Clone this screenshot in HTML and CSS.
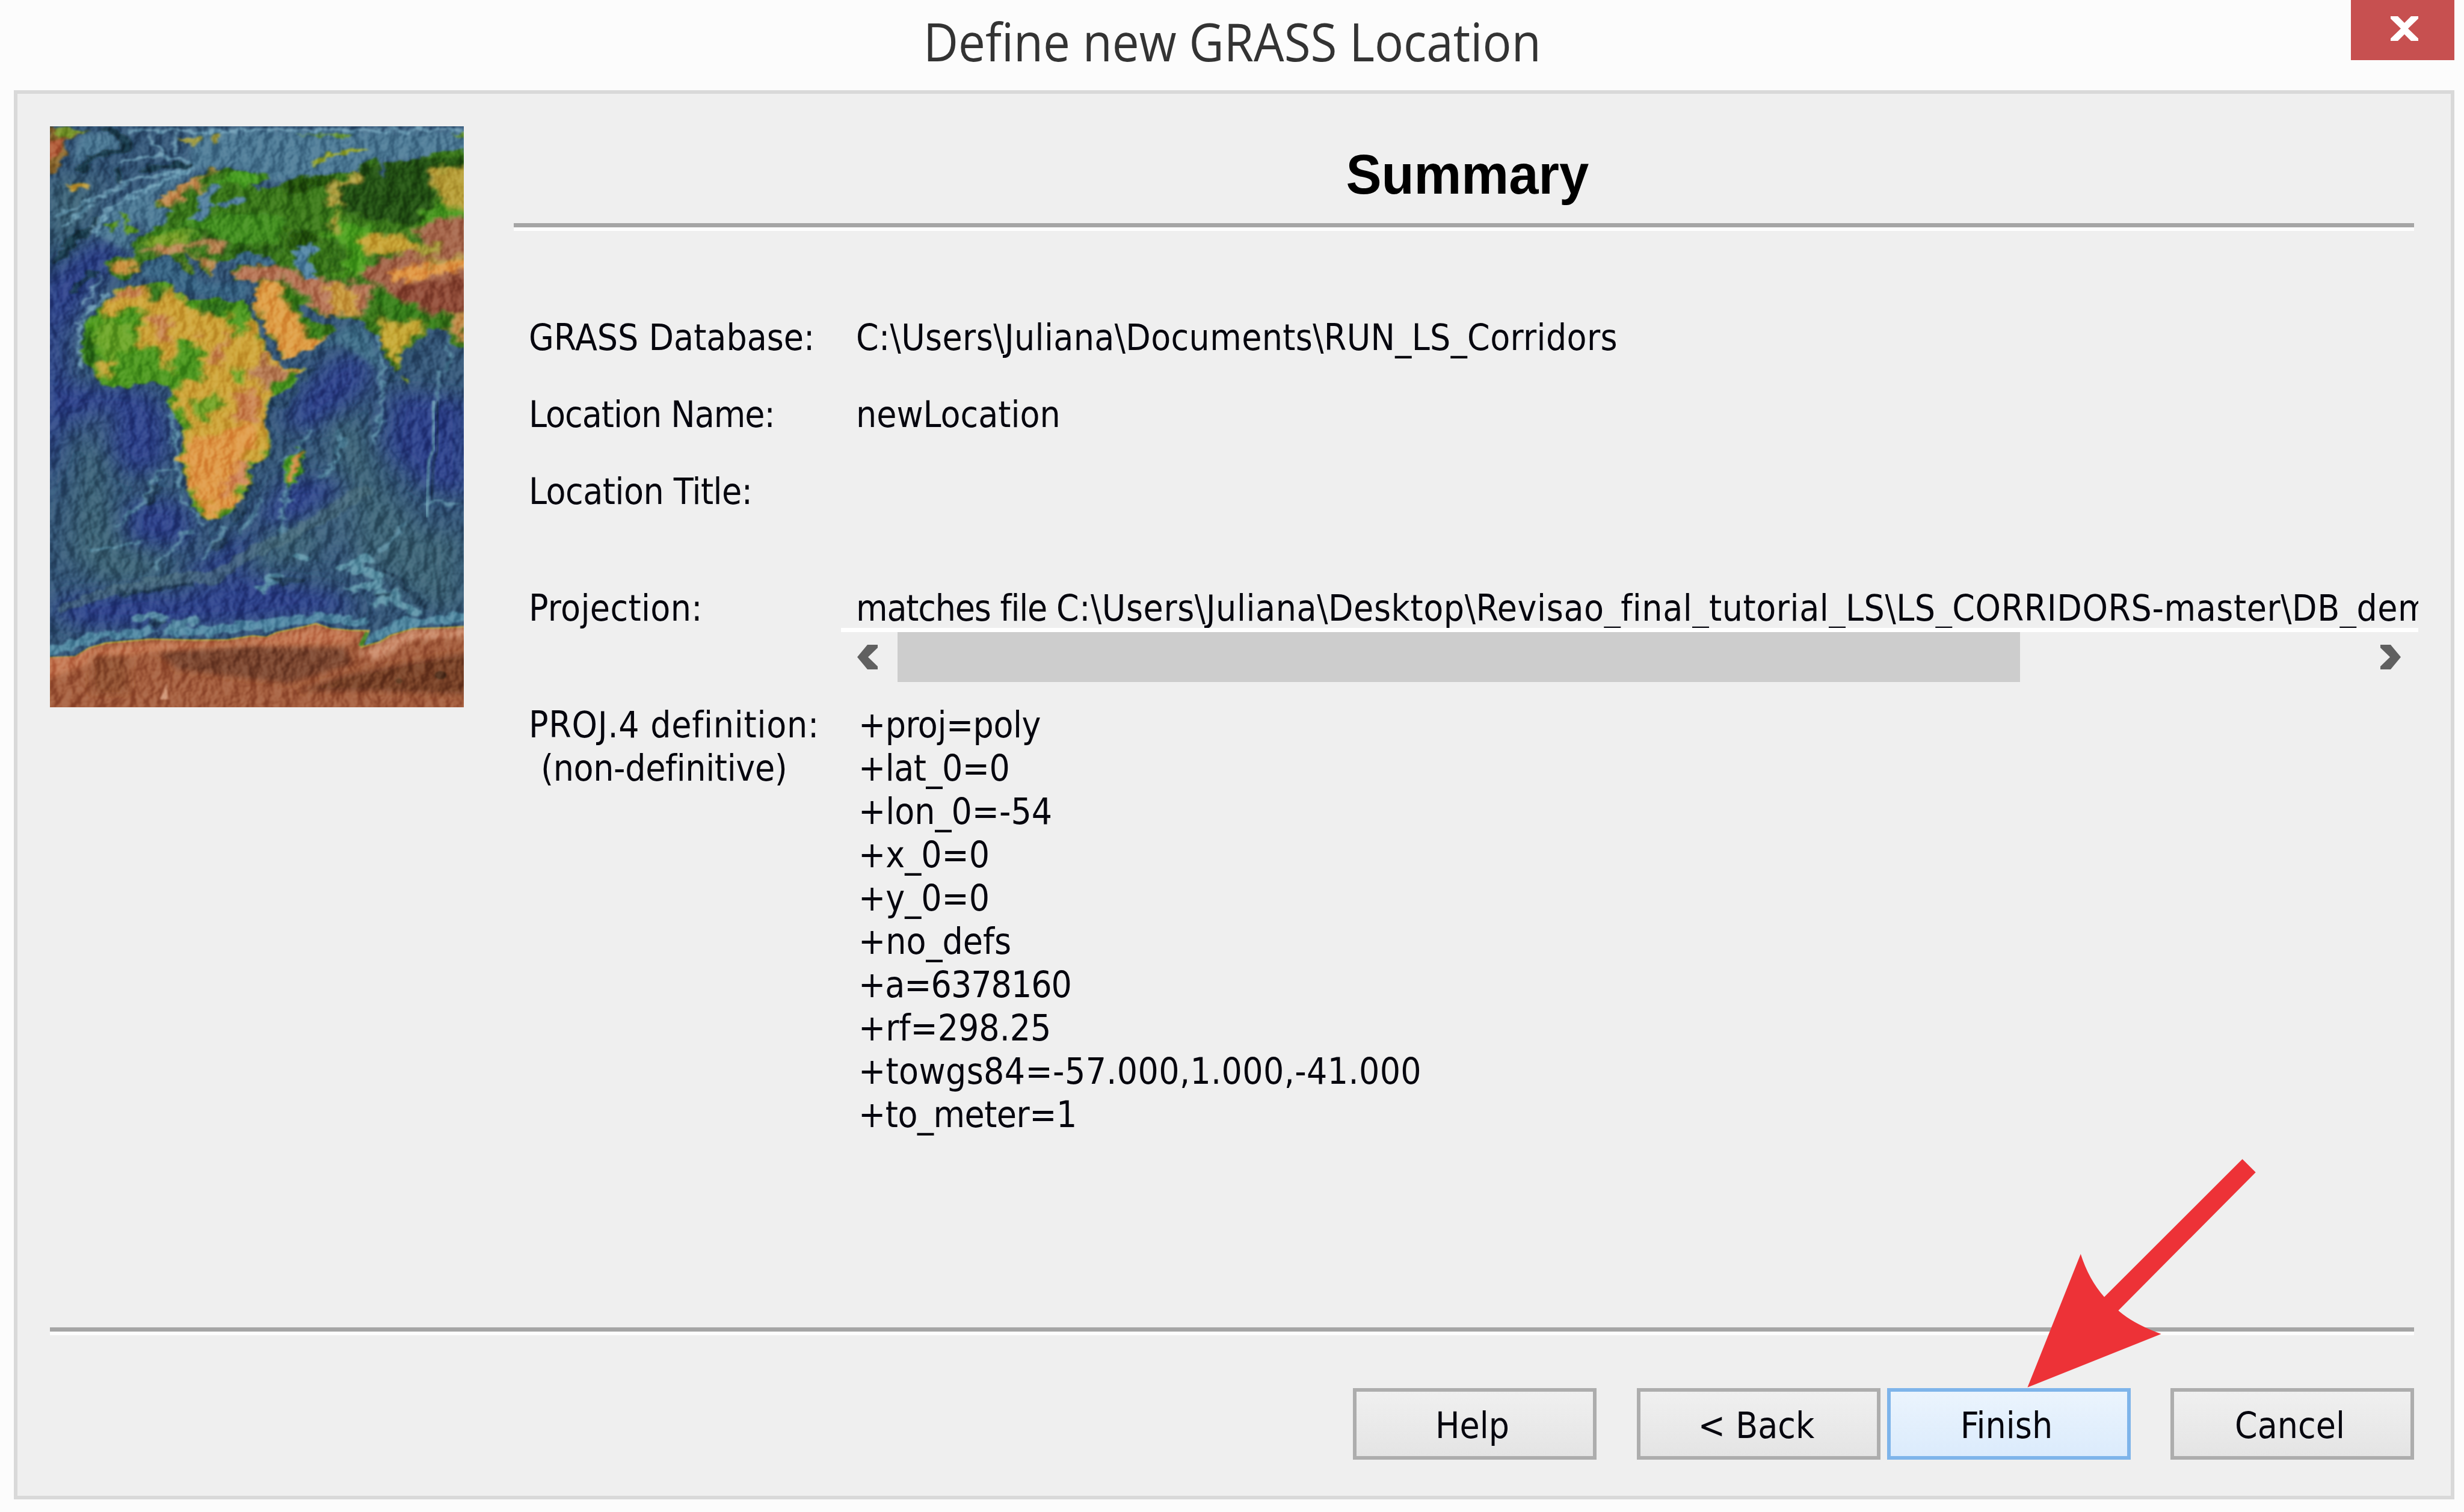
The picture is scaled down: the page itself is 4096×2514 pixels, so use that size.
FILE: index.html
```html
<!DOCTYPE html>
<html lang="en">
<head>
<meta charset="utf-8">
<title>Define new GRASS Location</title>
<link rel="stylesheet" href="styles.css">
</head>
<body>
<header class="titlebar">
  <h1 class="title">Define new GRASS Location</h1>
  <button class="close" aria-label="Close"><svg viewBox="0 0 46 41"><path d="M0 0h12l11 11L34 0h12v4L29 20.500l17 16.500v4H34L23 30 12 41H0v-4l17-16.500L0 4z"/></svg></button>
</header>
<main class="panel">
  <div class="content">
    <svg class="map" viewBox="38 42 1496 2983" preserveAspectRatio="none">
      <defs>
        <filter id="relief" x="0" y="0" width="100%" height="100%" color-interpolation-filters="sRGB">
          <feTurbulence type="fractalNoise" baseFrequency=".022 .012" numOctaves="4" seed="8" result="n"/>
          <feDiffuseLighting in="n" surfaceScale="30" diffuseConstant=".72" lighting-color="#fff"><feDistantLight azimuth="205" elevation="46"/></feDiffuseLighting>
          <feGaussianBlur stdDeviation="4"/>
        </filter>
        <filter id="b4" x="-10%" y="-10%" width="120%" height="120%"><feGaussianBlur stdDeviation="4"/></filter>
        <filter id="ridge" x="-10%" y="-10%" width="120%" height="120%">
          <feTurbulence type="fractalNoise" baseFrequency=".02" numOctaves="3" seed="5" result="t"/>
          <feDisplacementMap in="SourceGraphic" in2="t" scale="60" xChannelSelector="R" yChannelSelector="G"/>
          <feGaussianBlur stdDeviation="5"/>
        </filter>
        <filter id="b14" x="-30%" y="-30%" width="160%" height="160%"><feGaussianBlur stdDeviation="13"/></filter>
        <filter id="b40" x="-50%" y="-50%" width="200%" height="200%"><feGaussianBlur stdDeviation="46"/></filter>
        <filter id="rough" x="-5%" y="-5%" width="110%" height="110%">
          <feTurbulence type="fractalNoise" baseFrequency=".03" numOctaves="2" seed="3" result="t"/>
          <feDisplacementMap in="SourceGraphic" in2="t" scale="44" xChannelSelector="R" yChannelSelector="G"/>
          <feGaussianBlur stdDeviation="5"/>
        </filter>
        <filter id="patch" x="-5%" y="-5%" width="110%" height="110%">
          <feTurbulence type="fractalNoise" baseFrequency=".018" numOctaves="3" seed="12" result="t"/>
          <feDisplacementMap in="SourceGraphic" in2="t" scale="90" xChannelSelector="R" yChannelSelector="G"/>
          <feGaussianBlur stdDeviation="7"/>
        </filter>
        <path id="eurasia" d="M425 410L510 350 560 300 620 265 690 258 740 280 800 290 840 310 800 330 770 340 790 370 850 350 900 310 950 300 1060 290 1160 270 1170 230 1215 210 1235 240 1240 310 1255 300 1250 230 1290 225 1400 200 1460 170 1560 165V1180L1500 1170 1470 1090 1430 1070 1390 1110 1350 1160 1310 1200 1305 1270 1285 1310 1250 1220 1230 1120 1200 1100 1170 1050 1150 1030 1040 1025 990 990 950 950 935 960 960 1020 1010 1050 1070 1070 1060 1110 1000 1170 885 1245 860 1180 810 1060 770 970 780 900 790 840 700 830 690 780 720 755 850 755 830 705 800 700 750 680 700 710 690 740 650 735 630 780 620 830 590 770 560 720 520 685 530 720 560 790 540 800 500 740 460 700 420 715 380 740 350 790 310 835 260 810 245 730 290 715 345 720V680L330 640 380 600 420 560 455 540 460 490 490 480 480 460 440 465 425 440z"/>
        <path id="africa" d="M470 840L400 850 290 870 245 930 210 990 160 1060 155 1230 190 1290 230 1370 270 1390 340 1370 410 1355 460 1380 480 1410 465 1470 520 1590 518 1650 500 1750 530 1860 550 1970 590 2058 660 2053 720 1998 745 1908 770 1868 765 1788 830 1733 835 1668 820 1560 830 1440 900 1390 960 1280 880 1280 840 1230 800 1120 765 1000 740 930 700 950 620 920 550 940 490 890z"/>
        <path id="antarctica" d="M30 2770L130 2765 180 2720 240 2695 400 2675 560 2680 680 2678 770 2658 820 2665 860 2640 960 2610 1000 2595 1050 2620 1120 2630 1190 2632 1165 2715 1230 2690 1270 2655 1350 2622 1440 2618 1550 2610V3060H30z"/>
        <clipPath id="cE"><use href="#eurasia"/></clipPath>
        <clipPath id="cF"><use href="#africa"/></clipPath>
        <clipPath id="cA"><use href="#antarctica"/></clipPath>
      </defs>
      <rect x="38" y="42" width="1496" height="2983" fill="#37597a"/>
      <!-- deep basins -->
      <g filter="url(#b40)" fill="#2f4090" opacity=".85">
        <path d="M0 850L200 620 330 680 200 850 90 1120 110 1500 0 1950z"/>
        <path d="M90 1370L400 1400 470 1550 460 1760 350 1850 220 1700 110 1500z"/>
        <path d="M1060 1230L1200 1200 1190 1380 1000 1600 880 1580 940 1400z"/>
        <path d="M1270 1400L1560 1450V1950L1400 1900 1240 1700z"/>
        <path d="M320 1980L500 1950 560 2080 520 2200 300 2170z"/>
        <path d="M900 1850L1130 1880 1150 2200 1020 2220 960 2080 780 2080z"/>
        <path d="M560 2300L780 2100 760 2350 1080 2440 1160 2530 700 2600 160 2620 50 2550 60 2470 500 2400z"/>
      </g>
      <g filter="url(#b40)" fill="#436b78" opacity=".75">
        <path d="M180 1500h80l-20 380 60 300 200 150-240 80L100 2250z"/>
        <path d="M1040 1550h120l80 330 150 240 140 20v420l-160-80-260-260-260 60-400 180v-60l260-80 400-440z"/>
        <path d="M40 320L200 300 180 500 120 620 40 700z"/>
      </g>
      <!-- arctic and continental shelves -->
      <g filter="url(#b14)" fill="#507b97">
        <path d="M560 60L1560 70V190L1200 230 1140 290 860 330 700 260 570 270 420 400 330 560 340 700 210 600 240 470 420 330 540 230z"/>
        <path d="M330 440L700 380 600 560 400 620z"/>
        <path d="M150 80L270 70 300 140 190 200 120 230z"/>
        <path d="M1140 1040L1200 1120 1250 1320 1190 1250 1080 1150 1000 1180z" fill="#42718b"/>
        <path d="M480 850L760 850 740 930 620 920 500 880zM350 800L400 730 480 710 600 860 480 850z" fill="#3b6887"/>
      </g>
      <g filter="url(#ridge)" fill="none" stroke-linecap="round" stroke-linejoin="round">
        <path d="M230 55Q330 90 320 150L190 200 140 270M275 260L285 330M90 660L220 520M60 740L150 600M120 880L200 790M380 260L540 240" stroke="#16303f" stroke-width="30" opacity=".75"/>
        <path d="M830 1450L880 1480 980 1290M1270 1340L1330 1210 1400 1120" stroke="#264864" stroke-width="26" opacity=".6"/>
        <path d="M250 900L180 1000 140 1080 150 1280M320 60L500 70 660 65 1540 60M290 230L430 190 540 220M300 330L400 300 550 265 420 340 300 420 240 480 210 610M60 510L200 420 320 340M90 550L200 440M180 560L220 600M160 960L220 830M400 100L440 170M480 90L500 180" stroke="#7fb0c6" stroke-width="15" opacity=".75"/>
        <path d="M470 1440L490 1600 500 1800 520 1960 590 2090M500 1800L430 1830 380 1960 290 2080M970 1610L940 1720 890 1740 900 1900 880 2020 870 2160M1080 1600L1100 1640 1060 1800 1020 1840M1230 1540L1210 1660M1220 1100L1240 1300 1235 1560M1400 1970L1530 1980M1320 2070L1240 2220M660 2100V2150L600 2250M790 1950L770 2050 720 2130M200 2220L370 2170M420 2300L540 2110M1470 1130L1480 1300M1440 1300L1430 1500" stroke="#659bb0" stroke-width="15" opacity=".75"/>
        <path d="M90 2510L290 2420 560 2350 620 2370 730 2260 850 2180 1020 2050 1170 1910" stroke="#527481" stroke-width="54" opacity=".6"/>
        <path d="M38 2740L170 2680 240 2650 360 2650 400 2620M470 2640L700 2620 760 2600 860 2600 1000 2560 1160 2590M1190 2690L1300 2600 1540 2560" stroke="#5f9ab0" stroke-width="46" opacity=".8"/>
        <path d="M355 2570L390 2550 450 2570M480 2620L550 2580M810 2420L850 2350M1100 2300L1180 2260 1140 2320 1230 2340 1210 2400 1130 2420M1230 2430L1300 2490 1350 2540M940 2250L960 2260M1220 2500L1290 2440" stroke="#69a0b2" stroke-width="38" opacity=".85"/>
        <path d="M860 2380L960 2370M1260 2320L1330 2420 1400 2520M1220 2450L1270 2440M410 2590L440 2590M760 1880L710 2060M420 1900L390 1980M640 2210L680 2160M300 2440L560 2390" stroke="#203f55" stroke-width="24" opacity=".75"/>
      </g>
      <path d="M1425 1450V1700L1407 1760 1400 2050" fill="none" stroke="#6fa3b5" stroke-width="12" opacity=".8" filter="url(#b4)"/>
      <path d="M1440 1450V1700L1424 1760 1418 1960" fill="none" stroke="#213e5c" stroke-width="12" opacity=".6" filter="url(#b4)"/>
      <!-- eurasia -->
      <g filter="url(#rough)">
        <use href="#eurasia" fill="#3d7a1e"/>
        <g clip-path="url(#cE)"><g filter="url(#patch)">
          <path d="M620 500L780 480 900 520 860 640 700 650 560 600 400 640 430 570z" fill="#459120"/>
          <path d="M690 260L830 300 740 350 650 320z" fill="#4aa021"/>
          <path d="M1160 240L1280 210 1430 200 1420 420 1350 560 1220 520 1100 480 1080 400z" fill="#275416"/>
          <path d="M1400 210L1600 190V250L1420 260z" fill="#2c5c15"/>
          <path d="M930 570L1000 590 1010 640 910 660 890 610zM860 330L1060 290 1090 340 900 400z" fill="#27560f"/>
          <path d="M470 560L600 560 700 660 860 660 860 690 680 700 560 590z" fill="#2c6114"/>
          <path d="M1060 490L1100 500 1150 560 1200 560 1180 680 1200 760 1150 830 1080 820 1100 640 1030 600z" fill="#4fa321"/>
          <path d="M1050 680L1100 640 1110 780 1060 800z" fill="#2e6816"/>
          <path d="M1320 570L1450 430 1600 460V540L1420 520 1350 600z" fill="#4b9a22"/>
          <path d="M1420 270L1600 250V470L1480 460 1430 370z" fill="#b9a13b"/>
          <path d="M1150 610L1240 590 1350 620 1380 690 1240 690 1150 650z" fill="#c9a638"/>
          <path d="M1340 560L1400 560 1410 520 1600 510V1000L1400 1000 1300 930 1230 860 1160 800 1200 740 1330 690 1430 690z" fill="#a7684d"/>
          <path d="M1340 690L1430 640 1460 690 1380 710z" fill="#a9a23d"/>
          <path d="M1270 790L1360 750 1600 730V780L1420 800 1350 840 1280 830z" fill="#e29b4a"/>
          <path d="M1390 730L1600 690V730L1420 750z" fill="#b5994b"/>
          <path d="M1260 860L1600 800V990L1420 1000 1320 950z" fill="#93503a"/>
          <path d="M690 790L760 750 900 750 960 830 1030 810 1080 850 1200 840 1190 960 1160 1030 1040 1020 960 940 880 830 760 840z" fill="#b9795a"/>
          <path d="M1040 850L1130 860 1160 1020 1050 1010z" fill="#cca044"/>
          <path d="M780 850L860 840 930 960 950 1100 1060 1150 890 1250 800 1060 770 960z" fill="#df9f47"/>
          <path d="M860 860L930 920 980 1040 1040 1080 1040 1140 970 1130 940 1040z" fill="#3c821b"/>
          <path d="M1230 1040L1400 1040 1350 1160 1300 1180 1300 1310 1240 1180z" fill="#c7aa37"/>
          <path d="M1190 900L1260 900 1400 1010 1460 1040 1400 1100 1390 1040 1270 1030z" fill="#38801b"/>
          <path d="M1470 1010L1560 1000V1160L1500 1120z" fill="#c38e4c"/>
          <path d="M425 400L570 300 640 265 620 310 540 370 490 440 440 465z" fill="#c98f54"/>
          <path d="M250 730L340 730 340 790 290 830 270 800z" fill="#cf9845"/>
          <path d="M350 700L440 650 540 620 650 620 670 690 620 690 600 640 500 680 430 710z" fill="#c08d5c"/>
          <path d="M390 640L450 590 550 600 520 640 420 660z" fill="#7ba32a"/>
          <path d="M530 700L660 740 620 820 590 760zM480 700L550 790 530 750z" fill="#bf8e55"/>
          <path d="M1065 460L1065 350 1160 300M1055 580L1080 500" fill="none" stroke="#b8a544" stroke-width="28"/>
        </g></g>
        <path d="M570 480L580 390 630 340 660 345 630 390 610 430 630 450 590 530 540 520zM640 440L740 410 745 430 660 455z" fill="#5482a2"/>
        <path d="M910 680L990 640 1015 680 960 710 980 760 1005 830 960 830 930 760z" fill="#5688a7"/>
        <path d="M695 745L720 690 770 690 860 740 820 755z" fill="#3c6c8a"/>
        <path d="M290 480L320 490 325 540 365 580 310 600 320 550zM240 550L280 530 270 580z" fill="#5b9623"/>
        <path d="M85 345L175 335 175 360 120 375z" fill="#c5a13c"/>
        <path d="M30 50L180 65 90 110 100 190 70 260 30 290z" fill="#8d6c32"/>
        <path d="M30 110L90 110 70 190 30 220z" fill="#b3613c"/>
        <path d="M60 50L180 65 70 110z" fill="#7d9a2e"/>
        <path d="M500 100L590 100 560 150zM620 90h40l-30 50z" fill="#a5a047"/>
        <path d="M990 240L1050 185 1180 155" fill="none" stroke="#9dab32" stroke-width="17"/>
        <path d="M1480 80L1560 70V110zM920 80L1130 85 1100 100z" fill="#6d9b38"/>
        <path d="M1315 1320L1335 1340 1325 1370z" fill="#96ad30"/>
      </g>
      <!-- africa -->
      <g filter="url(#rough)">
        <use href="#africa" fill="#4f9a20"/>
        <g clip-path="url(#cF)"><g filter="url(#patch)">
          <path d="M240 950L290 870 470 840 520 930 580 1000 680 1020 700 1150 780 1030 830 1200 960 1290 840 1380 830 1540 820 1730 740 1800 730 2000 600 2060 510 1800 530 1590 470 1400 590 1330 600 1180 500 1150 470 1300 430 1290 440 1180 350 1160 400 1000 330 980 220 1040z" fill="#cfa63a"/>
          <path d="M400 850L480 850 460 940 400 930zM590 920L700 940 690 990 600 1020 570 980zM160 1080L200 1130 210 1230 180 1280 150 1230z" fill="#31741a"/>
          <path d="M200 1060L330 1040 340 1180 260 1230 200 1160z" fill="#6da62a"/>
          <path d="M190 1260L260 1240 270 1340 220 1320z" fill="#c7a83a"/>
          <path d="M240 950L300 880 400 860 340 910zM400 1030L480 1020 470 1180 420 1110zM550 1110L580 1080 590 1120zM630 1180L680 1100 660 1280 630 1270z" fill="#cb8a56"/>
          <path d="M800 1220L840 1220 850 1300 940 1290 860 1370 820 1400 770 1330z" fill="#b97f58"/>
          <path d="M710 1400L760 1370 810 1470 800 1560 700 1560z" fill="#cc8653"/>
          <path d="M540 1450L640 1410 670 1470 600 1560 540 1520z" fill="#75a52b"/>
          <path d="M690 1290L750 1290 740 1370 700 1350z" fill="#73a62a"/>
          <path d="M530 1660L700 1600 790 1570 780 1680 730 1740 740 1850 700 2000 620 2040 550 1900 520 1740z" fill="#e09b49"/>
          <path d="M720 1770L760 1760 730 1860 680 1940 640 1960z" fill="#d0875a"/>
        </g></g>
        <path d="M885 1750L920 1730 945 1690 955 1730 930 1870 900 1900 885 1850z" fill="#4c9b20"/>
        <path d="M915 1750L945 1700 945 1740 915 1870 895 1870z" fill="#d5914b"/>
      </g>
      <!-- antarctica -->
      <g filter="url(#b4)">
        <use href="#antarctica" fill="#a6603f" stroke="#b5a540" stroke-width="8"/>
        <g clip-path="url(#cA)">
          <g filter="url(#b14)">
            <path d="M0 2760L200 2720 400 2690 700 2690 1000 2610 1160 2640 1120 2700 700 2720 400 2740 180 2800 0 2900z" fill="#c67a54"/>
            <path d="M1150 2750L1340 2630 1560 2620V2660L1350 2680 1220 2780z" fill="#cf9070"/>
            <path d="M430 2740L760 2710 1100 2720 1130 2800 900 2900 500 2830z" fill="#7e4a30"/>
            <path d="M1100 2860L1560 2740V2960L1200 2940 940 2940z" fill="#7b452c"/>
            <path d="M190 2760h130v190H190z" fill="#945434"/>
          </g>
          <path d="M435 2985L458 2900 468 2985z" fill="#d19a7b"/>
          <circle cx="1450" cy="2860" r="22" fill="#4f2f1d"/><circle cx="1300" cy="2890" r="14" fill="#59301d"/>
        </g>
        <path d="M1185 2640L1160 2710" stroke="#4b8a2a" stroke-width="16"/>
      </g>
      <rect class="relief" x="38" y="42" width="1496" height="2983" filter="url(#relief)"/>
    </svg>
    <section class="summary">
      <h2 class="heading">Summary</h2>
      <div class="rule"></div>
      <dl class="fields">
        <dt>GRASS Database:</dt><dd class="path">C:\Users\Juliana\Documents\RUN_LS_Corridors</dd>
        <dt class="tight">Location Name:</dt><dd>newLocation</dd>
        <dt class="snug">Location Title:</dt><dd></dd>
        <dt class="path">Projection:</dt>
        <dd class="scroller">
          <div class="clip"><span class="lead">matches file </span>C:\Users\Juliana\Desktop\Revisao_final_tutorial_LS\LS_CORRIDORS-master\DB_dem</div>
          <div class="scrollbar">
            <svg class="chev" viewBox="0 0 34 41"><path d="M17 0H34V5L18 20.500 34 36V41H17L0 20.500z"/></svg>
            <div class="thumb"></div>
            <svg class="chev end" viewBox="0 0 34 41"><path d="M17 0H0V5L16 20.500 0 36V41H17L34 20.500z"/></svg>
          </div>
        </dd>
        <dt><span class="wide">PROJ.4 definition:</span><br><span class="sub">(non-definitive)</span></dt>
        <dd class="params"><span class="snug">+proj=poly</span><br><span class="snug">+lat_0=0</span><br>+lon_0=-54<br>+x_0=0<br>+y_0=0<br>+no_defs<br><span class="tight">+a=6378160</span><br>+rf=298.25<br><span class="path">+towgs84=-57.000,1.000,-41.000</span><br><span class="snug">+to_meter=1</span></dd>
      </dl>
    </section>
  </div>
  <div class="rule"></div>
  <footer class="buttons">
    <button class="btn">Help</button>
    <button class="btn back">&lt; Back</button>
    <button class="btn finish">Finish</button>
    <button class="btn cancel">Cancel</button>
  </footer>
</main>
<svg class="arrow" viewBox="3370 1927 380 380"><path d="M3727.600 1927.200L3749.700 1949.200 3521.400 2179Q3546 2201 3592.600 2218L3370.400 2306.800 3458.800 2085Q3472 2127 3498 2156.600z"/></svg>
</body>
</html>
```
FILE: styles.css
```css
* { box-sizing: border-box; }
body {
  margin: 0;
  width: 4096px;
  height: 2514px;
  overflow: hidden;
  display: flex;
  flex-direction: column;
  position: relative;
  background: #fcfcfc;
  color: #06060e;
  font: 60px/72px "DejaVu Sans Condensed", "DejaVu Sans", sans-serif;
  font-stretch: condensed;
}
h1, h2, dl, dd { margin: 0; font-weight: normal; }
button { font: inherit; color: inherit; padding: 0; border: 0; }

.titlebar { height: 150px; display: flex; flex: none; justify-content: space-between; padding: 0 16px 0 1535px; }
.title {
  padding-top: 8px;
  white-space: nowrap;
  font: 88px/120px "Open Sans", "Noto Sans", sans-serif;
  font-stretch: normal;
  color: #333;
  transform: scaleX(.909);
  transform-origin: left;
}
.close { width: 172px; height: 100px; background: #c75050; flex: none; display: flex; justify-content: center; padding: 27px 0 0 5px; }
.close svg { width: 46px; height: 41px; fill: #fff; }

.panel {
  margin: 0 16px 0 23px;
  height: 2343px;
  border: 6px solid #d9d9d9;
  background: #efefef;
  padding: 54px 61px 0 54px;
  display: flex;
  flex-direction: column;
}
.content { display: flex; gap: 83px; height: 1997px; flex: none; }
.map { width: 688px; height: 966px; flex: none; }
.relief { mix-blend-mode: soft-light; opacity: .55; }
.summary { flex: 1; min-width: 0; }
.heading {
  height: 161px;
  padding: 27px 0 0 12px;
  text-align: center;
  font: bold 92px/106px "Liberation Sans", Arial, sans-serif;
  font-stretch: normal;
  color: #000;
  transform: scaleX(.963);
}
.rule { height: 13px; flex: none; border-top: 7px solid #a5a5a5; border-bottom: 6px solid #fdfdfd; }

.fields {
  display: grid;
  grid-template-columns: 519px 1fr;
  grid-template-rows: 128px 128px 194px 194px auto;
  padding: 141px 0 0 25px;
  margin-right: -7px;
  white-space: nowrap;
}
.fields dd { padding-left: 25px; min-width: 0; }
.fields dd.scroller { padding: 0; }
.clip { height: 76px; padding-left: 25px; overflow: hidden; border-bottom: 7px solid #fff; letter-spacing: .58px; }
.lead { letter-spacing: -1.2px; }
.path { letter-spacing: .36px; }
.tight { letter-spacing: -1px; }
.snug { letter-spacing: -.5px; }
.wide { letter-spacing: .75px; }
.scrollbar { display: flex; height: 82px; align-items: center; padding: 0 29px 0 27px; }
.chev { width: 34px; height: 41px; fill: #606060; flex: none; }
.thumb { width: 1866px; height: 83px; margin-left: 33px; background: #cdcdcd; }
.end { margin-left: auto; }
.sub { padding-left: 20px; letter-spacing: -.35px; }
.fields dd.params { padding-left: 29px; }

.buttons { display: flex; padding-top: 88px; justify-content: flex-end; }
.btn {
  width: 405px;
  height: 119px;
  border: 6px solid #adadad;
  background: linear-gradient(#f0f0f0, #e4e4e4);
  padding: 5px 8px 0 0;
}
.back { margin-left: 67px; }
.finish { margin-left: 11px; border-color: #7eb4ea; background: linear-gradient(#ebf4fd, #dbebfc); }
.cancel { margin-left: 66px; }

.arrow { position: absolute; left: 3370px; top: 1927px; width: 380px; height: 380px; fill: #ed3237; }
```
